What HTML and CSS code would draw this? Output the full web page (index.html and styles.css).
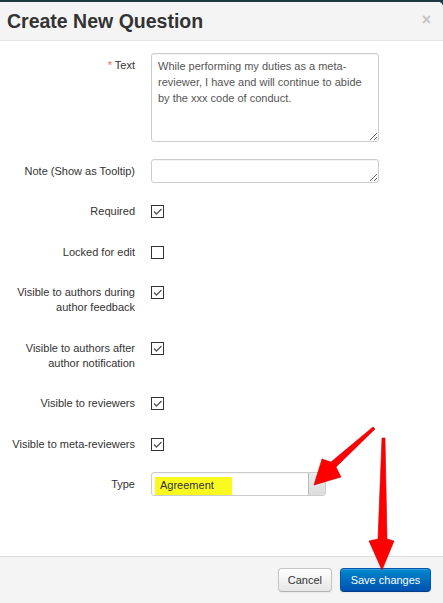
FILE: index.html
```html
<!DOCTYPE html>
<html lang="en">
<head>
    <meta charset="UTF-8">
    <title>Create New Question</title>
    <link rel="stylesheet" href="styles.css">
</head>
<body>
    <div id="okno">
        <div class="naglowek">
            <h3>Create New Question</h3>
            <span class="zamknij">&times;</span>
        </div>

        <div class="tresc">
            <div class="wiersz">
                <label><span class="gwiazdka">*</span> Text</label>
                <textarea class="pole duze">While performing my duties as a meta-reviewer, I have and will continue to abide by the xxx code of conduct.</textarea>
            </div>
            <div class="wiersz">
                <label>Note (Show as Tooltip)</label>
                <textarea class="pole male"></textarea>
            </div>
            <div class="wiersz">
                <label>Required</label>
                <span class="pudelko zaznaczone"><svg viewBox="0 0 11 11"><polyline points="2,5.5 4.5,8 9.5,3"/></svg></span>
            </div>
            <div class="wiersz">
                <label>Locked for edit</label>
                <span class="pudelko"></span>
            </div>
            <div class="wiersz">
                <label>Visible to authors during author feedback</label>
                <span class="pudelko zaznaczone"><svg viewBox="0 0 11 11"><polyline points="2,5.5 4.5,8 9.5,3"/></svg></span>
            </div>
            <div class="wiersz">
                <label>Visible to authors after author notification</label>
                <span class="pudelko zaznaczone"><svg viewBox="0 0 11 11"><polyline points="2,5.5 4.5,8 9.5,3"/></svg></span>
            </div>
            <div class="wiersz">
                <label>Visible to reviewers</label>
                <span class="pudelko zaznaczone"><svg viewBox="0 0 11 11"><polyline points="2,5.5 4.5,8 9.5,3"/></svg></span>
            </div>
            <div class="wiersz">
                <label>Visible to meta-reviewers</label>
                <span class="pudelko zaznaczone"><svg viewBox="0 0 11 11"><polyline points="2,5.5 4.5,8 9.5,3"/></svg></span>
            </div>
            <div class="wiersz typ">
                <label>Type</label>
                <div class="lista">
                    <span class="wartosc"><span class="zolte">Agreement</span></span>
                    <span class="strzalka"></span>
                </div>
            </div>
        </div>

        <div class="stopka">
            <button class="przycisk">Cancel</button>
            <button class="przycisk niebieski">Save changes</button>
        </div>

        <!-- czerwone strzalki z adnotacji -->
        <svg class="adnotacje" width="443" height="603" viewBox="0 0 443 603">
            <polygon points="373,427 375,429 336,467 341,477 314,485 322,459 331,462"/>
            <polygon points="382,438 385,438 387,539 394,541 382,570 369,541 378,539"/>
        </svg>
    </div>
</body>
</html>
```

FILE: styles.css
```css
*{box-sizing: border-box;}
body{
    margin: 0;
    background-color: #1f3a42;
    font-family: "Liberation Sans", Arial, sans-serif;
    font-size: 11px;
    color: #333;
}
#okno{
    position: relative;
    margin-top: 2px;
    height: 601px;
    background-color: white;
    border-top-right-radius: 5px;
    display: flex;
    flex-direction: column;
    overflow: hidden;
}

.naglowek{
    display: flex;
    justify-content: space-between;
    align-items: center;
    height: 39px;
    padding: 0 12px 0 7px;
    background-color: #f4f4f4;
    border-bottom: 1px solid #e6e6e6;
}
.naglowek h3{
    margin: 0;
    font-size: 19.5px;
    font-weight: bold;
    color: #333;
}
.zamknij{
    font-size: 16px;
    font-weight: bold;
    color: #c4c4c4;
    margin-top: -2px;
}

.tresc{
    flex: 1;
    padding-top: 12px;
    display: flex;
    flex-direction: column;
    gap: 16.5px;
}
.wiersz{
    display: grid;
    grid-template-columns: 135px 1fr;
    column-gap: 16px;
    align-items: start;
}
.wiersz label{
    text-align: right;
    line-height: 15px;
    padding: 5px 0 4px 8px;
}
.typ label{
    padding-top: 4.5px;
}
.gwiazdka{
    color: #e5725b;
}

.pole{
    display: block;
    width: 228px;
    margin: 0;
    padding: 4px 6px;
    border: 1px solid #ccc;
    border-radius: 3px;
    font-family: "Liberation Sans", Arial, sans-serif;
    font-size: 11px;
    line-height: 16px;
    color: #555;
    box-shadow: inset 0 1px 1px rgba(0, 0, 0, 0.05);
}
.duze{
    height: 89px;
}
.male{
    height: 24px;
}

.pudelko{
    width: 13px;
    height: 13px;
    margin-top: 6px;
    border: 1px solid #333;
    background-color: white;
    display: flex;
}
.pudelko svg{
    width: 11px;
    height: 11px;
    fill: none;
    stroke: #555;
    stroke-width: 1.3;
}

.lista{
    display: flex;
    width: 175px;
    height: 24px;
    border: 1px solid #ccc;
    border-radius: 3px;
    overflow: hidden;
    box-shadow: inset 0 1px 1px rgba(0, 0, 0, 0.05);
}
.wartosc{
    flex: 1;
    padding: 4px 3px 0 3px;
}
.zolte{
    display: block;
    width: 77px;
    height: 18px;
    padding: 2px 0 0 5px;
    background-color: #fafa1e;
    color: #333;
    font-size: 11px;
}
.strzalka{
    width: 17px;
    background: linear-gradient(#ececec, #dcdcdc);
    border-left: 1px solid #bbb;
}

.stopka{
    display: flex;
    justify-content: flex-end;
    gap: 8px;
    height: 47px;
    padding: 11px 12px 0 0;
    background-color: #f4f4f4;
    border-top: 1px solid #ddd;
}
.przycisk{
    height: 24px;
    padding: 0 9px;
    font-family: "Liberation Sans", Arial, sans-serif;
    font-size: 11px;
    color: #333;
    background: linear-gradient(#ffffff, #e6e6e6);
    border: 1px solid #c5c5c5;
    border-bottom-color: #b3b3b3;
    border-radius: 4px;
    box-shadow: inset 0 1px 0 rgba(255, 255, 255, 0.2), 0 1px 2px rgba(0, 0, 0, 0.05);
}
.niebieski{
    width: 91px;
    color: white;
    background: linear-gradient(#0088cc, #0050b0);
    border-color: #0055b3 #0055b3 #003f88;
}

.adnotacje{
    position: absolute;
    top: -2px;
    left: 0;
    pointer-events: none;
}
.adnotacje polygon{
    fill: #ff0000;
    stroke: #c80000;
    stroke-width: 0.6;
    stroke-linejoin: round;
}
```
